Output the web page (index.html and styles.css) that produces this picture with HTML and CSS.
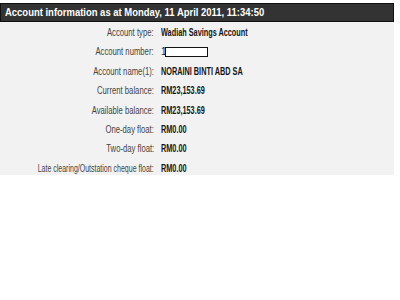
FILE: index.html
```html
<!DOCTYPE html>
<html>
<head>
<meta charset="utf-8">
<link rel="stylesheet" href="styles.css">
</head>
<body>
<div class="panel">
  <div class="header"><span class="hx">Account information as at Monday, 11 April 2011, 11:34:50</span></div>
  <div class="rows">
    <div class="label"><span class="lx">Account type:</span></div><div class="value"><span class="vx">Wadiah Savings Account</span></div>
    <div class="label"><span class="lx">Account number:</span></div><div class="value"><span class="caret">1</span><span class="box"></span></div>
    <div class="label"><span class="lx">Account name(1):</span></div><div class="value"><span class="vx">NORAINI BINTI ABD SA</span></div>
    <div class="label"><span class="lx">Current balance:</span></div><div class="value"><span class="vx">RM23,153.69</span></div>
    <div class="label"><span class="lx">Available balance:</span></div><div class="value"><span class="vx">RM23,153.69</span></div>
    <div class="label"><span class="lx">One-day float:</span></div><div class="value"><span class="vx">RM0.00</span></div>
    <div class="label"><span class="lx">Two-day float:</span></div><div class="value"><span class="vx">RM0.00</span></div>
    <div class="label"><span class="lx lx-long">Late clearing/Outstation cheque float:</span></div><div class="value"><span class="vx">RM0.00</span></div>
  </div>
</div>
</body>
</html>
```
FILE: styles.css
```css
html, body { margin: 0; padding: 0; background: #ffffff; }
body { font-family: "Liberation Sans", Arial, sans-serif; }
.panel {
  margin-top: 3px;
  width: 394px;
  height: 172px;
  background: #f2f2f2;
}
.header {
  background: #333333;
  border: 1px solid #111;
  color: #ffffff;
  font-weight: bold;
  font-size: 11px;
  height: 19px;
  line-height: 17px;
  padding-left: 4px;
  box-sizing: border-box;
  white-space: nowrap;
}
.hx { display: inline-block; transform: scaleX(0.86); transform-origin: left center; }
.rows {
  display: grid;
  grid-template-columns: 154px 1fr;
  column-gap: 7px;
  padding-top: 1px;
  font-size: 10px;
}
.label, .value { height: 19.4px; line-height: 19.4px; white-space: nowrap; }
.label { display: flex; justify-content: flex-end; color: #444; min-width: 0; }
.lx { display: inline-block; flex: none; transform: scaleX(0.77); transform-origin: right center; }
.lx-long { transform: scaleX(0.70); }
.value { color: #151515; font-weight: bold; display: flex; align-items: center; }
.vx { display: inline-block; transform: scaleX(0.73); transform-origin: left center; }
.caret { font-weight: normal; width: 4px; line-height: 10px; }
.box {
  display: inline-block;
  width: 41px;
  height: 8px;
  border: 1px solid #111;
  background: #fff;
  margin-top: -1px;
}
```
